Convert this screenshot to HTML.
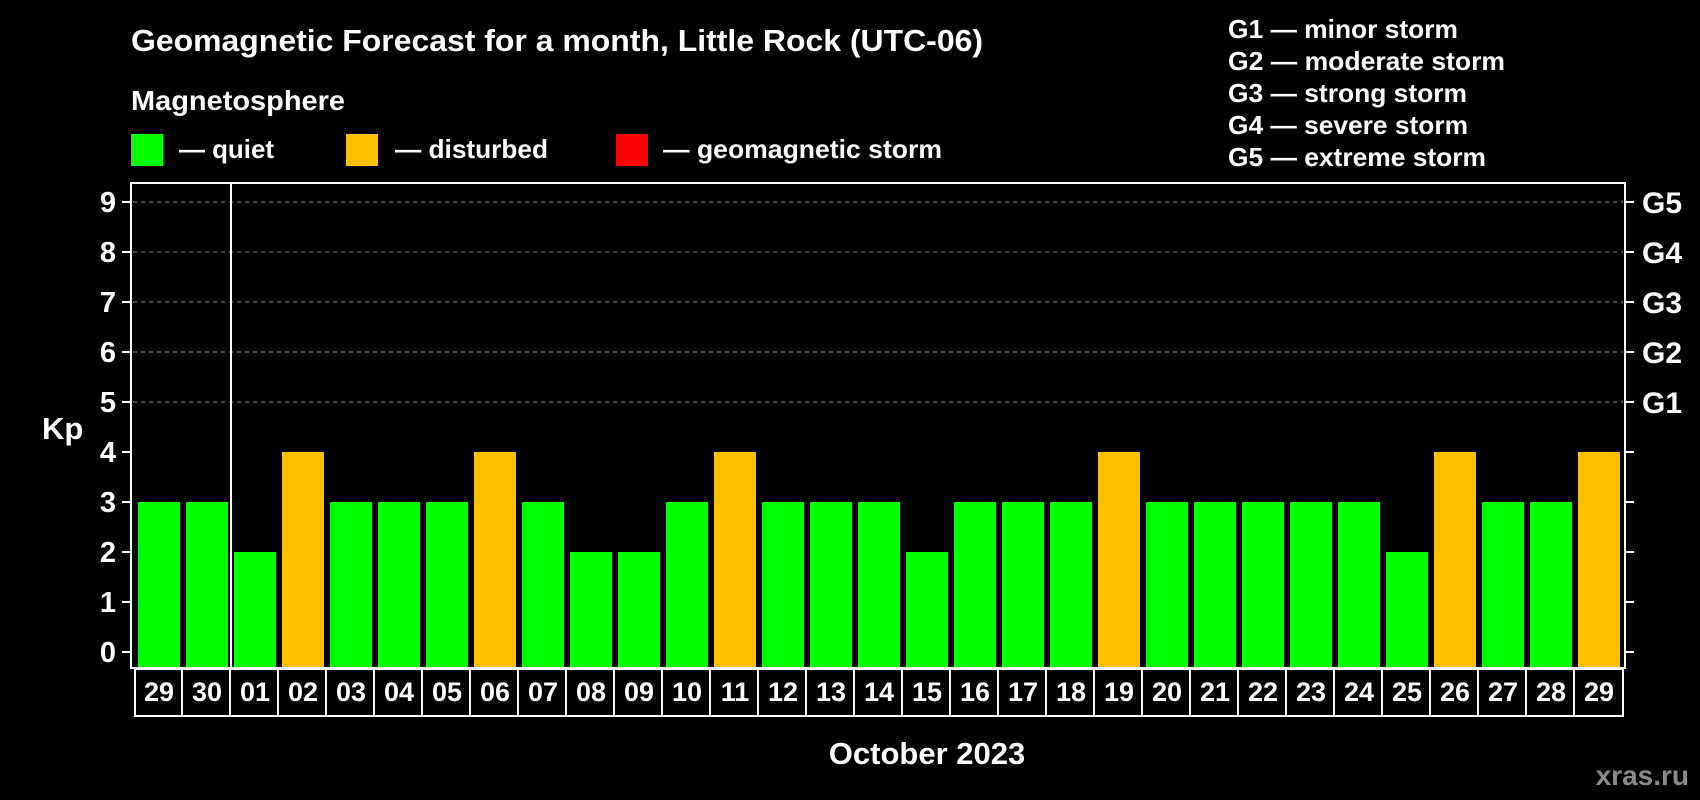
<!DOCTYPE html><html><head><style>body{margin:0;background:#000}svg{display:block}text{font-family:"Liberation Sans",Arial,sans-serif;font-weight:bold;fill:#fff}</style></head><body>
<svg width="1700" height="800" viewBox="0 0 1700 800" xmlns="http://www.w3.org/2000/svg">
<rect width="1700" height="800" fill="#000"/>
<text x="131" y="51" font-size="31" textLength="852" lengthAdjust="spacingAndGlyphs">Geomagnetic Forecast for a month, Little Rock (UTC-06)</text>
<text x="131" y="110" font-size="28" textLength="214" lengthAdjust="spacingAndGlyphs">Magnetosphere</text>
<rect x="131" y="134" width="32" height="32" fill="#00ff00"/><text x="179" y="158" font-size="26" textLength="95" lengthAdjust="spacingAndGlyphs">— quiet</text>
<rect x="346" y="134" width="32" height="32" fill="#ffc000"/><text x="395" y="158" font-size="26" textLength="153" lengthAdjust="spacingAndGlyphs">— disturbed</text>
<rect x="616" y="134" width="32" height="32" fill="#ff0000"/><text x="663" y="158" font-size="26" textLength="279" lengthAdjust="spacingAndGlyphs">— geomagnetic storm</text>
<g font-size="26"><text x="1228" y="38" textLength="230" lengthAdjust="spacingAndGlyphs">G1 — minor storm</text><text x="1228" y="70" textLength="277" lengthAdjust="spacingAndGlyphs">G2 — moderate storm</text><text x="1228" y="102" textLength="239" lengthAdjust="spacingAndGlyphs">G3 — strong storm</text><text x="1228" y="134" textLength="240" lengthAdjust="spacingAndGlyphs">G4 — severe storm</text><text x="1228" y="166" textLength="258" lengthAdjust="spacingAndGlyphs">G5 — extreme storm</text></g>
<g id="chart"></g>
<text x="42" y="439" font-size="31">Kp</text>
<text x="927" y="764" font-size="31" text-anchor="middle">October 2023</text>
<text x="1689" y="785" font-size="28" text-anchor="end" style="fill:#8a8a8a">xras.ru</text>
</svg>
<script>
var g=document.getElementById('chart'),h='';
var v=[3,3,2,4,3,3,3,4,3,2,2,3,4,3,3,3,2,3,3,3,4,3,3,3,3,3,2,4,3,3,4];
var d=['29','30'];for(var i=1;i<=29;i++)d.push((i<10?'0':'')+i);
function Y(k){return 652-50*k}
for(var k=5;k<=9;k++)h+='<line x1="133" x2="1623" y1="'+Y(k)+'" y2="'+Y(k)+'" stroke="#888" stroke-dasharray="4,4"/>';
for(var i=0;i<31;i++){var x=138+48*i;h+='<rect x="'+x+'" y="'+Y(v[i])+'" width="42" height="'+(668-Y(v[i]))+'" fill="'+(v[i]==4?'#ffc000':'#00ff00')+'"/>';
h+='<text x="'+(x+21)+'" y="701" font-size="27" text-anchor="middle">'+d[i]+'</text>';}
h+='<rect x="131" y="183" width="1494" height="485" fill="none" stroke="#fff" stroke-width="2"/>';
h+='<line x1="231" x2="231" y1="183" y2="668" stroke="#fff" stroke-width="2"/>';
for(var k=0;k<=9;k++){h+='<line x1="122" x2="131" y1="'+Y(k)+'" y2="'+Y(k)+'" stroke="#fff" stroke-width="2"/><line x1="1625" x2="1634" y1="'+Y(k)+'" y2="'+Y(k)+'" stroke="#fff" stroke-width="2"/>';
h+='<text x="116" y="'+(Y(k)+10)+'" font-size="29" text-anchor="end">'+k+'</text>';
if(k>=5)h+='<text x="1642" y="'+(Y(k)+11)+'" font-size="30">G'+(k-4)+'</text>';}
h+='<rect x="135" y="669" width="1488" height="47" fill="none" stroke="#fff" stroke-width="2"/>';
for(var i=1;i<31;i++){var x=135+48*i-1;h+='<line x1="'+x+'" x2="'+x+'" y1="669" y2="716" stroke="#fff" stroke-width="2"/>';}
g.innerHTML=h;
</script>
</body></html>
